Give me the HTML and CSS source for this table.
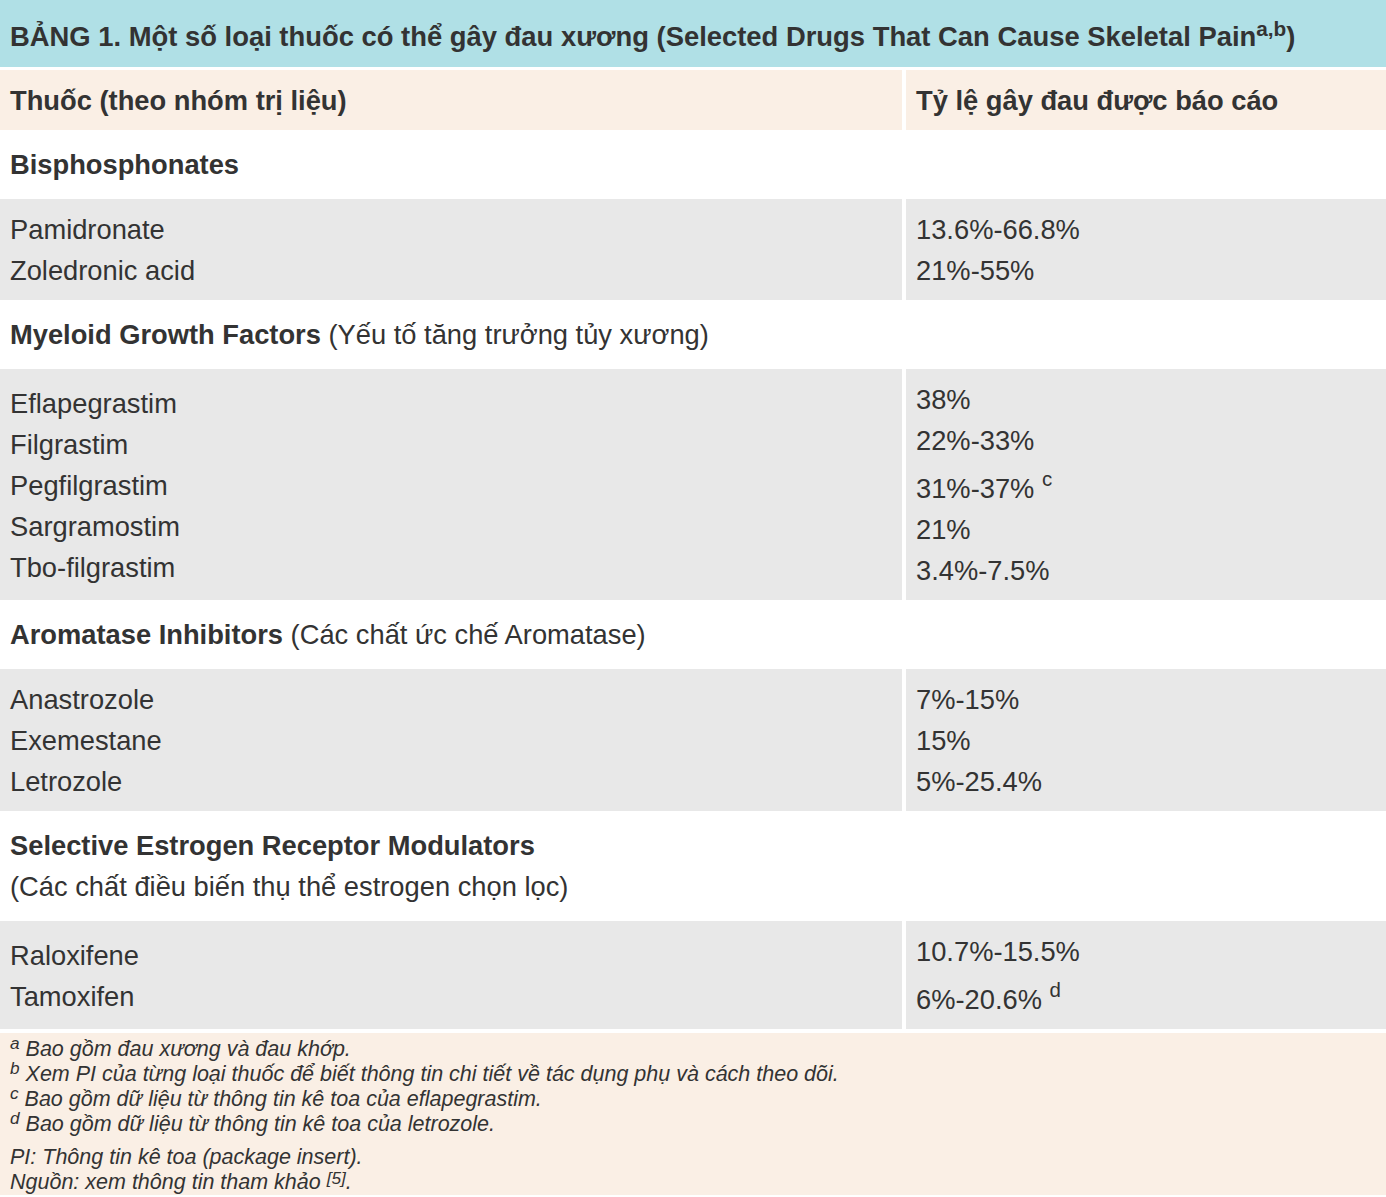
FILE: index.html
```html
<!DOCTYPE html>
<html lang="vi">
<head>
<meta charset="utf-8">
<title>Bảng 1</title>
<link rel="stylesheet" href="styles.css">
</head>
<body>
<div class="table">
  <div class="title">BẢNG 1. Một số loại thuốc có thể gây đau xương (Selected Drugs That Can Cause Skeletal Pain<sup class="tsup">a,b</sup>)</div>

  <div class="cell head">Thuốc (theo nhóm trị liệu)</div>
  <div class="cell head">Tỷ lệ gây đau được báo cáo</div>

  <div class="group"><b>Bisphosphonates</b></div>
  <div class="cell data">
    <div>Pamidronate</div>
    <div>Zoledronic acid</div>
  </div>
  <div class="cell data">
    <div>13.6%-66.8%</div>
    <div>21%-55%</div>
  </div>

  <div class="group"><b>Myeloid Growth Factors</b> (Yếu tố tăng trưởng tủy xương)</div>
  <div class="cell data">
    <div>Eflapegrastim</div>
    <div>Filgrastim</div>
    <div>Pegfilgrastim</div>
    <div>Sargramostim</div>
    <div>Tbo-filgrastim</div>
  </div>
  <div class="cell data top">
    <div>38%</div>
    <div>22%-33%</div>
    <div class="supline">31%-37% <sup class="dsup">c</sup></div>
    <div>21%</div>
    <div>3.4%-7.5%</div>
  </div>

  <div class="group"><b>Aromatase Inhibitors</b> (Các chất ức chế Aromatase)</div>
  <div class="cell data">
    <div>Anastrozole</div>
    <div>Exemestane</div>
    <div>Letrozole</div>
  </div>
  <div class="cell data">
    <div>7%-15%</div>
    <div>15%</div>
    <div>5%-25.4%</div>
  </div>

  <div class="group"><b>Selective Estrogen Receptor Modulators</b><br>(Các chất điều biến thụ thể estrogen chọn lọc)</div>
  <div class="cell data">
    <div>Raloxifene</div>
    <div>Tamoxifen</div>
  </div>
  <div class="cell data top">
    <div>10.7%-15.5%</div>
    <div class="supline">6%-20.6% <sup class="dsup">d</sup></div>
  </div>

  <div class="notes">
    <div class="fn"><sup>a</sup> Bao gồm đau xương và đau khớp.</div>
    <div class="fn"><sup>b</sup> Xem PI của từng loại thuốc để biết thông tin chi tiết về tác dụng phụ và cách theo dõi.</div>
    <div class="fn"><sup>c</sup> Bao gồm dữ liệu từ thông tin kê toa của eflapegrastim.</div>
    <div class="fn"><sup>d</sup> Bao gồm dữ liệu từ thông tin kê toa của letrozole.</div>
    <div class="fn gap">PI: Thông tin kê toa (package insert).</div>
    <div class="fn">Nguồn: xem thông tin tham khảo <sup class="ref">[5]</sup>.</div>
  </div>
</div>
</body>
</html>
```

FILE: styles.css
```css
html, body {
  margin: 0;
  padding: 0;
  background: #ffffff;
}

body {
  font-family: "Liberation Sans", Arial, Helvetica, sans-serif;
  color: #333333;
  width: 1386px;
  padding-bottom: 3px;
}

.table {
  display: grid;
  grid-template-columns: 902px 1fr;
  column-gap: 4px;
  row-gap: 3px;
}

.title {
  grid-column: 1 / -1;
  box-sizing: border-box;
  background: #b0e0e6;
  font-weight: bold;
  font-size: 27.4px;
  height: 67px;
  padding: 8px 0 0 10px;
  line-height: 58px;
  white-space: nowrap;
}

.tsup {
  font-size: 0.76em;
  line-height: 0;
  vertical-align: 10px;
}

.cell {
  padding: 0 10px;
  font-size: 27.3px;
  line-height: 41px;
}

.head {
  background: #faefe5;
  font-weight: bold;
  height: 60px;
  display: flex;
  align-items: center;
}

.group {
  grid-column: 1 / -1;
  font-size: 27.3px;
  line-height: 41px;
  padding: 11px 10px 11px;
}

.group b {
  font-weight: bold;
}

.data {
  background: #e8e8e8;
  padding-top: 10px;
  padding-bottom: 9px;
  display: flex;
  flex-direction: column;
  justify-content: center;
}

.data.top {
  justify-content: flex-start;
}

.supline {
  padding-top: 7px;
}

.dsup {
  font-size: 0.75em;
  line-height: 0;
  vertical-align: 12px;
}

.notes {
  grid-column: 1 / -1;
  background: #faefe5;
  margin-top: 1px;
  padding: 4px 10px 0;
  font-style: italic;
  font-size: 21.5px;
  line-height: 25px;
}

.fn sup {
  font-size: 0.8em;
  line-height: 0;
  vertical-align: 7px;
}

.fn sup.ref {
  vertical-align: 5px;
}

.fn.gap {
  margin-top: 8px;
}
```
